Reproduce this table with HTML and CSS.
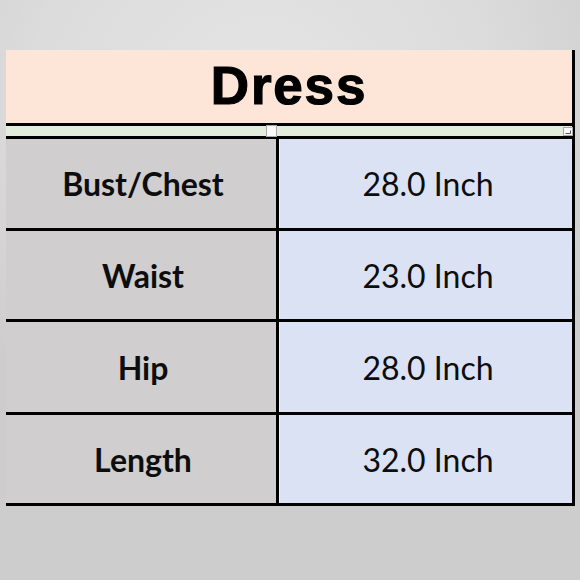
FILE: index.html
```
<!DOCTYPE html>
<html>
<head>
<meta charset="utf-8">
<link rel="stylesheet" href="styles.css">
</head>
<body>
<div class="page">
  <div class="sheet">
    <div class="title">Dress</div>
    <div class="strip">
      <span class="handle handle-mid"></span>
      <span class="handle handle-end"><svg width="6" height="4" viewBox="0 0 6 4"><path d="M0.5 3.5H5.5V0.5" fill="none" stroke="#555" stroke-width="1"/></svg></span>
    </div>
    <div class="row r1"><div class="label">Bust/Chest</div><div class="value">28.0 Inch</div></div>
    <div class="row r2"><div class="label">Waist</div><div class="value">23.0 Inch</div></div>
    <div class="row r3"><div class="label">Hip</div><div class="value">28.0 Inch</div></div>
    <div class="row r4"><div class="label">Length</div><div class="value">32.0 Inch</div></div>
  </div>
</div>
</body>
</html>
```
FILE: styles.css
```
html, body {
  margin: 0;
  padding: 0;
}
.page {
  width: 580px;
  height: 580px;
  background: radial-gradient(ellipse 70% 60% at 45% 15%, #e4e4e4 0%, #dcdcdc 55%, #cdcdcd 100%);
  padding-top: 50px;
  padding-left: 6px;
  box-sizing: border-box;
  overflow: hidden;
}
.sheet {
  width: 569px;
  border-right: 3px solid #000;
  box-sizing: border-box;
  display: flex;
  flex-direction: column;
}
.title {
  height: 76px;
  background: #fde5d7;
  border-bottom: 3px solid #000;
  display: flex;
  align-items: center;
  justify-content: center;
  font-family: "Liberation Sans", Arial, sans-serif;
  font-weight: bold;
  font-size: 53px;
  letter-spacing: 1.8px;
  -webkit-text-stroke: 1.2px #000;
  color: #000;
  padding-bottom: 2px;
  box-sizing: border-box;
}
.strip {
  position: relative;
  height: 10px;
  background: #e2eedb;
  border-bottom: 3px solid #000;
}
.handle {
  position: absolute;
  background: #fafafa;
  border: 1px solid #a8a8a8;
  box-sizing: border-box;
}
.handle-mid {
  left: 260px;
  top: -1px;
  width: 11px;
  height: 12px;
}
.handle-end {
  left: 557px;
  top: 1px;
  width: 10px;
  height: 9px;
  display: flex;
  align-items: center;
  justify-content: center;
}
.row {
  display: flex;
  border-bottom: 3px solid #000;
}
.r1 { height: 89px; }
.r2 { height: 88px; }
.r3 { height: 90px; }
.r4 { height: 88px; }
.label, .value {
  display: flex;
  align-items: center;
  justify-content: center;
  font-family: Lato, "Open Sans", sans-serif;
  font-size: 32px;
  color: #0d0d0d;
}
.label {
  background: #d0cece;
  border-right: 3px solid #000;
  font-weight: bold;
  padding-left: 4px;
  box-sizing: border-box;
  width: 273px;
}
.value {
  flex: 1;
  background: #dae2f3;
  border-left: 1px solid #eef1f8;
  padding-left: 4px;
}
```
